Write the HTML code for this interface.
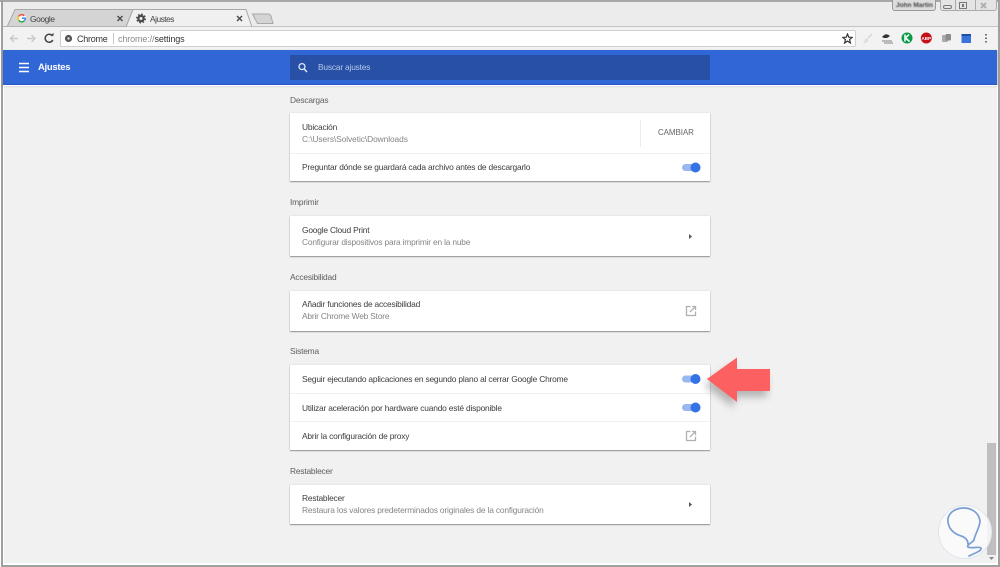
<!DOCTYPE html>
<html><head><meta charset="utf-8"><style>
html,body{margin:0;padding:0;width:1000px;height:567px;overflow:hidden;background:#fff}
*{box-sizing:border-box}
body{font-family:"Liberation Sans",sans-serif;position:relative}
.a{position:absolute;white-space:nowrap}
.t{position:absolute;white-space:nowrap;font-size:8.4px;letter-spacing:-.19px;line-height:12px;color:#3c3c3c;filter:blur(.35px)}
.s{color:#858585}
.h{color:#5e5e5e}
.card{position:absolute;left:290px;width:420px;background:#fff;box-shadow:0 1px 1px rgba(0,0,0,.38),0 0 2px rgba(0,0,0,.1)}
.sep{position:absolute;left:290px;width:420px;height:1px;background:#f0f0f0}
</style></head><body>
<!-- window frame -->
<div class="a" style="left:0;top:0;width:1000px;height:567px;background:#fff"></div>
<div class="a" style="left:1px;top:0;width:999px;height:565px;background:#e8e8e8"></div>
<div class="a" style="left:0;top:0;width:1000px;height:2px;background:#a8a8a8"></div>
<div class="a" style="left:1px;top:0;width:2px;height:567px;background:#a0a0a0"></div>
<div class="a" style="left:1px;top:565px;width:999px;height:2px;background:#a0a0a0"></div>
<div class="a" style="left:998px;top:0;width:2px;height:567px;background:#a0a0a0"></div>
<div class="a" style="left:3px;top:2px;width:995px;height:25px;background:#ececec"></div>
<!-- tabs -->
<svg class="a" style="left:0;top:0" width="1000" height="30">
<path d="M7 27 L15 9.500 H133 L126 27 Z" fill="#d4d4d4" stroke="#a8a8a8"/>
<path d="M126 27 L133 9.500 H246 L252 27 Z" fill="#f0f0f0" stroke="#a8a8a8"/>
<path d="M252.500 14 H268 Q270 14 271 16 L273 23.500 H257.500 Z" fill="#d4d4d4" stroke="#a8a8a8"/>
<line x1="3" y1="26.500" x2="126" y2="26.500" stroke="#b4b4b4"/>
<line x1="252" y1="26.500" x2="998" y2="26.500" stroke="#c4c4c4"/>
<circle cx="21.700" cy="18.300" r="4.500" fill="#fff"/>
<path d="M18.600 16.400 A3.600 3.600 0 0 1 24.300 15.800" fill="none" stroke="#ea4335" stroke-width="1.500"/>
<path d="M18.600 16.400 A3.600 3.600 0 0 0 18.700 20.300" fill="none" stroke="#fbbc05" stroke-width="1.500"/>
<path d="M18.700 20.300 A3.600 3.600 0 0 0 24.300 20.800" fill="none" stroke="#34a853" stroke-width="1.500"/>
<path d="M21.800 18.300 H25.400 A3.600 3.600 0 0 1 24.300 20.800" fill="none" stroke="#4285f4" stroke-width="1.500"/>
<path d="M117.500 16 l5 5 m0 -5 l-5 5 M237 16 l5 5 m0 -5 l-5 5" stroke="#4a4a4a" stroke-width="1.400" fill="none"/>
<circle cx="141" cy="18.500" r="2.600" fill="none" stroke="#4a4a4a" stroke-width="2.200"/>
<circle cx="141" cy="18.500" r="4.200" fill="none" stroke="#4a4a4a" stroke-width="1.500" stroke-dasharray="1.700 1.600"/>
</svg>
<div class="t" style="left:30px;top:13px;color:#444;letter-spacing:-.4px">Google</div>
<div class="t" style="left:150px;top:13px;color:#444;letter-spacing:-.5px">Ajustes</div>
<!-- window controls -->
<div class="a" style="left:892px;top:0;width:44px;height:11px;background:#ddd;border:1px solid #999;border-top:0;border-radius:0 0 3px 3px"></div>
<div class="t" style="left:896px;top:0;font-size:6.500px;line-height:12px;letter-spacing:0;color:#444;filter:blur(.5px);font-weight:bold">John Martin</div>
<div class="a" style="left:940px;top:0;width:57px;height:11px;background:#e4e4e4;border:1px solid #aaa;border-top:0;border-radius:0 0 3px 3px"></div>
<svg class="a" style="left:940px;top:0" width="58" height="12">
<rect x="3.500" y="5.500" width="8" height="3" rx="1.500" fill="none" stroke="#777"/>
<line x1="15.500" y1="0" x2="15.500" y2="11" stroke="#aaa"/>
<rect x="19.500" y="2.500" width="7" height="6" fill="none" stroke="#777"/>
<rect x="22" y="4" width="2" height="3" fill="#777"/>
<line x1="35.500" y1="0" x2="35.500" y2="11" stroke="#aaa"/>
<path d="M41 3 l5 5 m0 -5 l-5 5" stroke="#b0b0b0" stroke-width="2" fill="none"/>
</svg>
<!-- toolbar -->
<div class="a" style="left:3px;top:27px;width:995px;height:23px;background:#f2f2f2"></div>
<svg class="a" style="left:0;top:27px" width="60" height="23">
<path d="M18 11.500 H10.500 M14 8 L10.500 11.500 L14 15" fill="none" stroke="#c8c8c8" stroke-width="1.400"/>
<path d="M27 11.500 H35 M31.500 8 L35 11.500 L31.500 15" fill="none" stroke="#c8c8c8" stroke-width="1.400"/>
<path d="M52.500 9 A4 4 0 1 0 52.800 13" fill="none" stroke="#444" stroke-width="1.500"/>
<path d="M50.500 8.800 H53.500 V5.800 Z" fill="#444"/>
</svg>
<div class="a" style="left:60px;top:30px;width:796px;height:17px;background:#fff;border:1px solid #cfcfcf;border-radius:2px"></div>
<svg class="a" style="left:64px;top:33px" width="11" height="11"><circle cx="4.500" cy="5.500" r="3.600" fill="#555"/><circle cx="4.500" cy="5.500" r="1.200" fill="#ddd"/></svg>
<div class="t" style="left:77px;top:32.500px;color:#333;font-size:9px;letter-spacing:-.25px">Chrome</div>
<div class="a" style="left:113px;top:33px;width:1px;height:11px;background:#c8c8c8"></div>
<div class="t" style="left:118px;top:32.500px;color:#8a8a8a;font-size:9px;letter-spacing:-.12px">chrome://<span style="color:#333">settings</span></div>
<svg class="a" style="left:842px;top:33px" width="11" height="11"><path d="M5.500 1 L6.800 4.200 L10.200 4.400 L7.600 6.600 L8.400 10 L5.500 8.100 L2.600 10 L3.400 6.600 L.8 4.400 L4.200 4.200 Z" fill="none" stroke="#333" stroke-width="1.200"/></svg>
<svg class="a" style="left:860px;top:29px" width="135" height="20">
<path d="M3 14 L6 9 L9 11 L6 14 Z" fill="#ddd"/><path d="M8 9 L12 5" stroke="#ccc" stroke-width="1"/>
<path d="M22 8 Q26 3 30 7 L27 9 L24 9 Z" fill="#333"/><path d="M22 12 H32 M24 14 H33" stroke="#999" stroke-width="1.200"/>
<circle cx="47" cy="9" r="5.500" fill="#0a9a48"/><path d="M45 5.500 V12.500 M49 5.500 L45.500 9 L49.500 12.500" stroke="#fff" stroke-width="1.500" fill="none"/>
<circle cx="66.300" cy="9" r="5.500" fill="#c8101a"/><text x="66.300" y="11" font-size="4.500" font-weight="bold" fill="#fff" text-anchor="middle" font-family="Liberation Sans">ABP</text>
<rect x="82" y="6" width="6" height="7" rx="1" fill="#aaa"/><rect x="85.500" y="5" width="5.500" height="6.500" rx="1" fill="#8c8c8c"/>
<rect x="101.500" y="5" width="9.500" height="9" fill="#3a72dc"/><rect x="101.500" y="5" width="9.500" height="2" fill="#1f4fa8"/>
<path d="M126 5 v1.500 M126 8.500 v1.500 M126 12 v1.500" stroke="#444" stroke-width="1.500"/>
</svg>
<!-- blue header -->
<div class="a" style="left:3px;top:50px;width:994px;height:35px;background:#3166d6;border-bottom:1px solid #2a59c4;box-shadow:0 1px 2px rgba(0,0,0,.3)"></div>
<svg class="a" style="left:19px;top:62px" width="12" height="11"><path d="M0 1.500 H10 M0 5.500 H10 M0 9.500 H10" stroke="#fff" stroke-width="1.500"/></svg>
<div class="t" style="left:38px;top:61.500px;color:#fff;font-size:9.500px;letter-spacing:-.3px;font-weight:bold;filter:blur(.3px)">Ajustes</div>
<div class="a" style="left:290px;top:55px;width:420px;height:25px;background:#2850a6"></div>
<svg class="a" style="left:297px;top:62px" width="12" height="12"><circle cx="5" cy="4.600" r="3" fill="none" stroke="#e2e8f6" stroke-width="1.300"/><path d="M7.200 7 L10 10" stroke="#e2e8f6" stroke-width="1.500"/></svg>
<div class="t" style="left:318px;top:61px;color:#b8c8ea;font-size:8.400px">Buscar ajustes</div>
<!-- content -->
<div class="a" style="left:3px;top:85px;width:995px;height:480px;background:#fff"></div>
<div class="a" style="left:4px;top:86px;width:993px;height:477px;background:#f1f1f1"></div>
<div class="a" style="left:4px;top:86px;width:993px;height:2px;background:linear-gradient(#ddd,#f1f1f1)"></div>

<div class="t h" style="left:290px;top:93.500px">Descargas</div>
<div class="card" style="top:113px;height:68px"></div>
<div class="sep" style="top:153px"></div>
<div class="a" style="left:640px;top:120px;width:1px;height:27px;background:#ececec"></div>
<div class="t" style="left:302px;top:120.500px">Ubicación</div>
<div class="t s" style="left:302px;top:132.500px;letter-spacing:-.08px">C:\Users\Solvetic\Downloads</div>
<div class="t" style="left:658px;top:126.500px;color:#666;letter-spacing:-.1px;font-size:8px">CAMBIAR</div>
<div class="t" style="left:302px;top:161px">Preguntar dónde se guardará cada archivo antes de descargarlo</div>

<div class="t h" style="left:290px;top:196px">Imprimir</div>
<div class="card" style="top:216px;height:40px"></div>
<div class="t" style="left:302px;top:223.500px">Google Cloud Print</div>
<div class="t s" style="left:302px;top:236px">Configurar dispositivos para imprimir en la nube</div>

<div class="t h" style="left:290px;top:270.500px">Accesibilidad</div>
<div class="card" style="top:291px;height:40px"></div>
<div class="t" style="left:302px;top:298px">Añadir funciones de accesibilidad</div>
<div class="t s" style="left:302px;top:310px">Abrir Chrome Web Store</div>

<div class="t h" style="left:290px;top:345px">Sistema</div>
<div class="card" style="top:365px;height:85px"></div>
<div class="sep" style="top:393px"></div>
<div class="sep" style="top:421px"></div>
<div class="t" style="left:302px;top:373px">Seguir ejecutando aplicaciones en segundo plano al cerrar Google Chrome</div>
<div class="t" style="left:302px;top:401.500px">Utilizar aceleración por hardware cuando esté disponible</div>
<div class="t" style="left:302px;top:430px">Abrir la configuración de proxy</div>

<div class="t h" style="left:290px;top:465px">Restablecer</div>
<div class="card" style="top:485px;height:39px"></div>
<div class="t" style="left:302px;top:492px">Restablecer</div>
<div class="t s" style="left:302px;top:504px;letter-spacing:-.16px">Restaura los valores predeterminados originales de la configuración</div>

<!-- controls -->
<svg class="a" style="left:0;top:0" width="1000" height="567">
<rect x="682" y="164" width="17" height="7" rx="3.500" fill="#9ab8f0"/><circle cx="695.500" cy="167.500" r="5" fill="#3473e6"/>
<rect x="682" y="375.500" width="17" height="7" rx="3.500" fill="#9ab8f0"/><circle cx="695.500" cy="379" r="5" fill="#3473e6"/>
<rect x="682" y="404" width="17" height="7" rx="3.500" fill="#9ab8f0"/><circle cx="695.500" cy="407.500" r="5" fill="#3473e6"/>
<path d="M689 234 L692 236.500 L689 239 Z" fill="#555"/>
<path d="M689 502 L692 504.500 L689 507 Z" fill="#555"/>
<g fill="none" stroke="#b0b0b0" stroke-width="1.300">
<path d="M690.500 306.500 H686.500 V315.500 H695.500 V311.500 M692 306.500 H695.500 V310 M695.300 306.700 L690 312"/>
<path d="M690.500 431.500 H686.500 V440.500 H695.500 V436.500 M692 431.500 H695.500 V435 M695.300 431.700 L690 437"/>
</g>
<!-- arrow -->
<path d="M707 379 L737 358 V369 L770 369 V391 L737 391 V402 Z" fill="#000" opacity=".25" transform="translate(-3,6)" style="filter:blur(4px)"/>
<path d="M707 379 L737 357.500 V369 L770 369 V391 L737 391 V402 Z" fill="#fd6060"/>
<!-- scrollbar -->
<rect x="987" y="443" width="9" height="112" fill="#bfbfbf"/>
<path d="M989 557 H994 L991.500 560 Z" fill="#888"/>
<!-- watermark -->
<circle cx="965" cy="532" r="26.500" fill="#fafafa" fill-opacity=".88" stroke="#dfe5f0"/>
<path d="M969 556 C975 553 982 551 981 548 C979 546 972 549 968 547 C966 545 972 543 974 540 C975 534 980 527 980 521 C979 513 972 508 964 508 C954 508 947 514 948 522 C949 530 955 534 961 536 C965 537 968 540 968 544" fill="none" stroke="#7a9fd4" stroke-width="1.700" stroke-linecap="round"/>
</svg>
</body></html>
